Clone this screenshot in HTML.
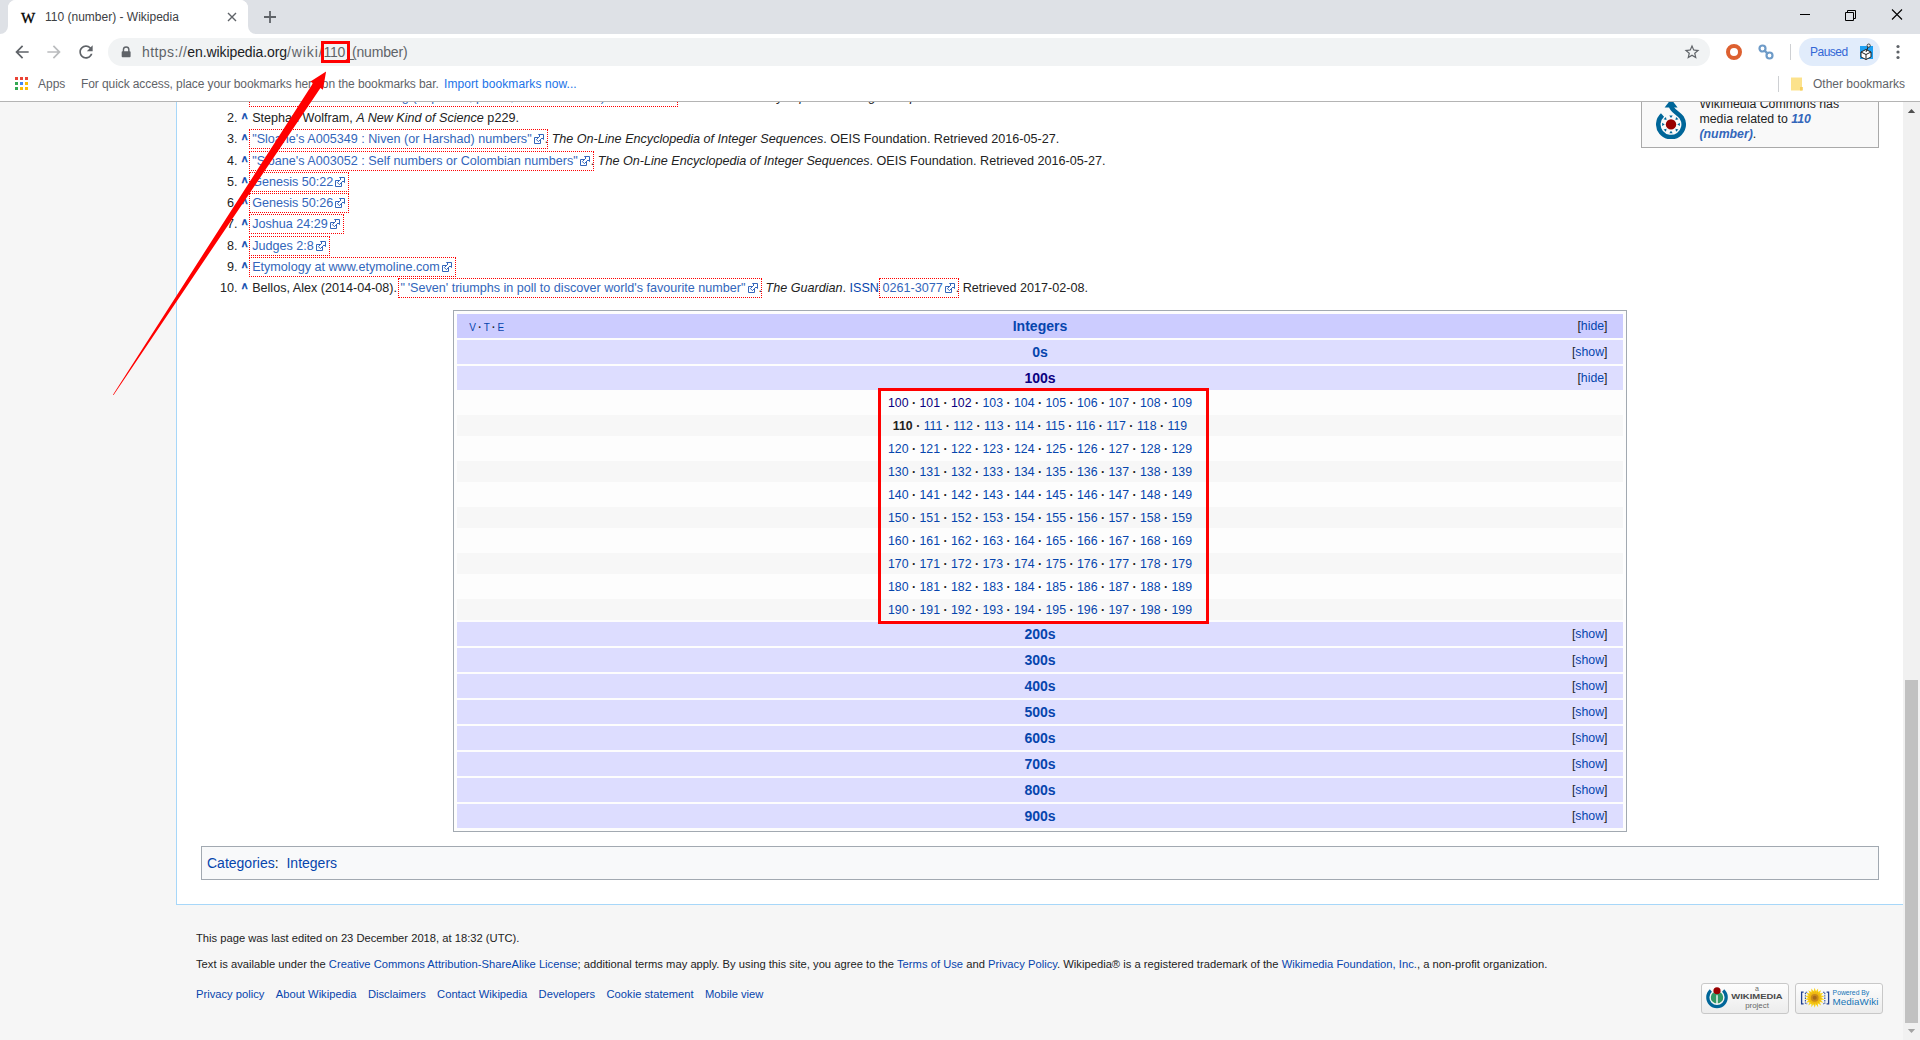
<!DOCTYPE html>
<html lang="en">
<head>
<meta charset="utf-8">
<title>110 (number) - Wikipedia</title>
<style>
html,body{margin:0;padding:0;}
body{width:1920px;height:1040px;overflow:hidden;position:relative;background:#f6f6f6;font-family:"Liberation Sans",Arial,sans-serif;color:#222;}
.abs{position:absolute;}
a{text-decoration:none;color:#0645ad;}
a.v{color:#0b0080;}
a.x{color:#3366bb;}
/* ---------- browser chrome ---------- */
#tabstrip{left:0;top:0;width:1920px;height:34px;background:#dee1e6;}
#toolbar{left:0;top:34px;width:1920px;height:67px;background:#fff;}
#chromeline{left:0;top:101px;width:1920px;height:1px;background:#b4b4b4;}
#tab{left:8px;top:0;width:240px;height:34px;background:#fff;border-radius:8px 8px 0 0;}
.ui{font-family:"Liberation Sans",Arial,sans-serif;white-space:nowrap;}
#pill{left:108px;top:38px;width:1602px;height:28px;border-radius:14px;background:#f1f3f4;}
#paused{left:1799px;top:38px;width:81px;height:28px;border-radius:14px;background:#e1ecfb;}
/* ---------- page ---------- */
#page{left:0;top:102px;width:1903px;height:938px;background:#f6f6f6;overflow:hidden;}
#content{left:176px;top:-100px;width:1727px;height:1005px;background:#fff;border:1px solid #a7d7f9;border-right:none;box-sizing:border-box;}
#sb{left:1903px;top:102px;width:17px;height:938px;background:#f1f1f1;}
#thumb{left:1905px;top:680px;width:13px;height:343px;background:#c1c1c1;}

/* references */
#refs{left:241.3px;top:0;font-size:12.6px;line-height:20.16px;white-space:nowrap;color:#222;}
#refs .r{position:absolute;left:0;height:20.16px;}
#refs .n{position:absolute;right:100%;margin-right:3.8px;top:0;}
#refs b.c{color:#0645ad;font-weight:bold;display:inline-block;width:7.36px;text-align:center;font-size:12px;line-height:10px;position:relative;top:.4px;transform:scaleX(.82);-webkit-text-stroke:.45px #0645ad;}
#refs a.x{outline:1px dotted #f00;outline-offset:2px;padding-right:13px;position:relative;}
#refs a.x svg{position:absolute;right:1px;top:2.4px;}

/* navbox */
#navbox{left:453px;top:310px;width:1174px;height:522px;box-sizing:border-box;border:1px solid #a2a9b1;background:#fdfdfd;font-size:12.32px;}
#navbox .h{position:absolute;left:3px;width:1166px;height:24px;background:#ddf;text-align:center;font-weight:bold;font-size:14.04px;line-height:24px;}
#navbox .h .t{position:absolute;right:15.5px;top:0;font-weight:normal;font-size:12.32px;color:#222;}
#navbox .l{position:absolute;left:3px;width:1166px;height:21px;text-align:center;line-height:23.4px;white-space:nowrap;word-spacing:0;}
#navbox .l.e{background:#f7f7f7;}
#navbox .l b.d{font-weight:bold;}
#vte{position:absolute;left:12.3px;top:1.6px;font-weight:normal;font-size:10px;word-spacing:-0.5px;color:#222;}

/* catlinks + footer + commons box */
#cat{left:201px;top:846px;width:1678px;height:34px;box-sizing:border-box;border:1px solid #a2a9b1;background:#f8f9fa;font-size:14px;line-height:32px;padding-left:5px;white-space:nowrap;}
.ft{font-size:11.2px;line-height:16px;white-space:nowrap;color:#222;}
#commons{left:1641px;top:60px;width:238px;height:88px;box-sizing:border-box;border:1px solid #aaa;background:#f9f9f9;font-size:12.32px;line-height:15.4px;color:#222;}
.badge{border:1px solid #c8c8c8;border-radius:3px;background:linear-gradient(#fdfdfd,#ececec);box-sizing:border-box;width:88px;height:31px;}
</style>
</head>
<body>
<!-- browser chrome -->
<div id="tabstrip" class="abs"></div>
<div id="toolbar" class="abs"></div>
<div id="tab" class="abs"></div>
<div id="pill" class="abs"></div>
<div id="paused" class="abs"></div>
<div id="chromeline" class="abs"></div>

<svg class="abs" style="left:0;top:0" width="264" height="34" viewBox="0 0 264 34"><path d="M0 34 A8 8 0 0 0 8 26 L8 8 A8 8 0 0 1 16 0 L240 0 A8 8 0 0 1 248 8 L248 26 A8 8 0 0 0 256 34 Z" fill="#fff"/></svg>
<div class="abs" id="favw" style="left:20px;top:8px;-webkit-text-stroke:.35px #000;width:16px;height:20px;font-family:'Liberation Serif',serif;font-size:15px;line-height:20px;color:#000;text-align:center;">W</div>
<div class="abs ui" id="tabtitle" style="left:45px;top:10px;font-size:12px;line-height:14px;color:#3c4043;">110 (number) - Wikipedia</div>
<svg class="abs" style="left:226px;top:11px" width="12" height="12" viewBox="0 0 12 12"><path d="M2 2 L10 10 M10 2 L2 10" stroke="#5f6368" stroke-width="1.4" fill="none"/></svg>
<svg class="abs" style="left:263px;top:10px" width="14" height="14" viewBox="0 0 14 14"><path d="M7 1 V13 M1 7 H13" stroke="#5f6368" stroke-width="1.8" fill="none"/></svg>
<!-- window controls -->
<svg class="abs" style="left:1795px;top:4px" width="120" height="22" viewBox="0 0 120 22"><path d="M5 10.5 H15" stroke="#000" stroke-width="1" fill="none"/><path d="M50.5 8.5 H58.5 V16.5 H50.5 Z M52.5 8.5 V6.5 H60.5 V14.5 H58.5" stroke="#000" stroke-width="1" fill="none"/><path d="M97 5.5 L107 15.5 M107 5.5 L97 15.5" stroke="#000" stroke-width="1.1" fill="none"/></svg>
<!-- nav buttons -->
<svg class="abs" style="left:12px;top:42px" width="20" height="20" viewBox="0 0 24 24"><path d="M20 11H7.83l5.59-5.59L12 4l-8 8 8 8 1.41-1.41L7.83 13H20v-2z" fill="#5f6368"/></svg>
<svg class="abs" style="left:44px;top:42px" width="20" height="20" viewBox="0 0 24 24"><path d="M12 4l-1.41 1.41L16.17 11H4v2h12.17l-5.58 5.59L12 20l8-8z" fill="#babcbe"/></svg>
<svg class="abs" style="left:76px;top:42px" width="20" height="20" viewBox="0 0 24 24"><path d="M17.65 6.35C16.2 4.9 14.21 4 12 4c-4.42 0-7.99 3.58-7.99 8s3.57 8 7.99 8c3.73 0 6.84-2.55 7.73-6h-2.08c-.82 2.33-3.04 4-5.65 4-3.31 0-6-2.69-6-6s2.69-6 6-6c1.66 0 3.14.69 4.22 1.78L13 11h7V4l-2.35 2.35z" fill="#5f6368"/></svg>
<!-- lock -->
<svg class="abs" style="left:121px;top:45.5px" width="10.3" height="12" viewBox="0 0 12 14"><path d="M2 6 V4.2 A4 4 0 0 1 10 4.2 V6 H10.2 A1 1 0 0 1 11.2 7 V12 A1 1 0 0 1 10.2 13 H1.8 A1 1 0 0 1 .8 12 V7 A1 1 0 0 1 1.8 6 Z M3.7 6 H8.3 V4.2 A2.3 2.3 0 0 0 3.7 4.2 Z" fill="#5f6368" fill-rule="evenodd"/></svg>
<div class="abs ui" id="url" style="left:142px;top:43px;font-size:14px;line-height:18px;color:#5f6368;"><span id="u1" style="letter-spacing:.41px">https://</span><span id="u2" style="color:#202124;letter-spacing:-.09px">en.wikipedia.org</span><span id="u3" style="display:inline-block;width:36.4px;letter-spacing:.9px">/wiki/</span><span id="u4" style="display:inline-block;width:22.7px;letter-spacing:-.2px">110</span><span id="u5" style="display:inline-block;width:5.9px;letter-spacing:-2px">_</span><span id="u6" style="letter-spacing:-.17px">(number)</span></div>
<!-- star -->
<svg class="abs" style="left:1683px;top:43px" width="18" height="18" viewBox="0 0 24 24"><path d="M22 9.24l-7.19-.62L12 2 9.19 8.63 2 9.24l5.46 4.73L5.82 21 12 17.27 18.18 21l-1.63-7.03L22 9.24zM12 15.4l-3.76 2.27 1-4.28-3.32-2.88 4.38-.38L12 6.1l1.71 4.04 4.38.38-3.32 2.88 1 4.28L12 15.4z" fill="#5f6368"/></svg>
<!-- extensions -->
<svg class="abs" style="left:1724px;top:42px" width="20" height="20" viewBox="0 0 20 20"><circle cx="10" cy="10" r="6" fill="none" stroke="#dd6030" stroke-width="4"/></svg>
<svg class="abs" style="left:1756px;top:42px" width="20" height="20" viewBox="0 0 20 20"><circle cx="6.5" cy="6.5" r="3" fill="none" stroke="#6e9bc8" stroke-width="2.2"/><circle cx="13.5" cy="13.5" r="3" fill="none" stroke="#6e9bc8" stroke-width="2.2"/><path d="M8 8 L12 12" stroke="#6e9bc8" stroke-width="2.4"/></svg>
<div class="abs" style="left:1790px;top:44px;width:1px;height:16px;background:#ced0d3;"></div>
<div class="abs ui" id="pausedt" style="letter-spacing:-.5px;left:1810px;top:45px;font-size:12px;line-height:14px;color:#3367d6;">Paused</div>
<svg class="abs" style="left:1858px;top:43px" width="17" height="18" viewBox="0 0 17 18"><rect x="2" y="3" width="13" height="13" fill="#1ea0f2"/><path d="M3 9 L8 6.5 L13 9 L13 14 L8 16.5 L3 14 Z" fill="#fff" stroke="#222" stroke-width="1"/><path d="M3 9 L8 11.5 L13 9 M8 11.5 V16.5" stroke="#222" stroke-width="1" fill="none"/><path d="M8 9 L10.5 3" stroke="#222" stroke-width="1"/><circle cx="10.7" cy="2.6" r="1.6" fill="#eee" stroke="#222" stroke-width=".8"/></svg>
<svg class="abs" style="left:1894px;top:43px" width="8" height="18" viewBox="0 0 8 18"><circle cx="4" cy="3.5" r="1.6" fill="#5f6368"/><circle cx="4" cy="9" r="1.6" fill="#5f6368"/><circle cx="4" cy="14.5" r="1.6" fill="#5f6368"/></svg>
<!-- bookmarks bar -->
<svg class="abs" style="left:15px;top:77px" width="14" height="14" viewBox="0 0 14 14"><g><rect x="0" y="0" width="3" height="3" fill="#ea4335"/><rect x="5" y="0" width="3" height="3" fill="#ea4335"/><rect x="10" y="0" width="3" height="3" fill="#ea4335"/><rect x="0" y="5" width="3" height="3" fill="#34a853"/><rect x="5" y="5" width="3" height="3" fill="#4285f4"/><rect x="10" y="5" width="3" height="3" fill="#fbbc05"/><rect x="0" y="10" width="3" height="3" fill="#34a853"/><rect x="5" y="10" width="3" height="3" fill="#fbbc05"/><rect x="10" y="10" width="3" height="3" fill="#fbbc05"/></g></svg>
<div class="abs ui" id="apps" style="left:38px;top:77px;font-size:12px;line-height:14px;color:#5f6368;">Apps</div>
<div class="abs ui" id="bmmsg" style="letter-spacing:-.09px;left:81px;top:77px;font-size:12px;line-height:14px;color:#5f6368;">For quick access, place your bookmarks here on the bookmarks bar.</div>
<div class="abs ui" id="bmimp" style="letter-spacing:.09px;left:444px;top:77px;font-size:12px;line-height:14px;color:#1a73e8;">Import bookmarks now...</div>
<div class="abs" style="left:1778px;top:76px;width:1px;height:16px;background:#ced0d3;"></div>
<svg class="abs" style="left:1790px;top:76px" width="14" height="16" viewBox="0 0 14 16"><path d="M1 1.5 H12 V14.5 H1 Z" fill="#fce28c"/><path d="M10 11 H12.8 V14.5 H10 Z" fill="#f7cf5d"/></svg>
<div class="abs ui" id="otherbm" style="left:1813px;top:77px;font-size:12px;line-height:14px;color:#5f6368;">Other bookmarks</div>
<!--CHROME-->
<!-- page -->
<div id="page" class="abs">
<div id="pg" class="abs" style="left:0;top:-102px;width:1903px;height:1040px;">
<div id="content" class="abs"></div>
<div id="refs" class="abs">
<div class="r" id="r1" style="top:87px"><span class="n">1.</span><b class="c">^</b> <a class="x">"Sloane's A002378 : Oblong (or promic, pronic, or heteromecic) numbers"<svg width="10" height="10" viewBox="0 0 10 10"><path d="M.5 3.5 H6.5 V9.5 H.5 Z" fill="#fff" stroke="#36b" stroke-width="1"/><path d="M4.5 .5 H9.5 V5.5 L8 4 L4.4 7.6 L2.4 5.6 L6 2 Z" fill="#fff" stroke="#36b" stroke-width="1" stroke-linejoin="miter"/></svg></a>. <i>The On-Line Encyclopedia of Integer Sequences</i>. OEIS Foundation. Retrieved 2016-05-27.</div>
<div class="r" id="r2" style="top:107.6px"><span class="n">2.</span><b class="c">^</b> Stephan Wolfram, <i>A New Kind of Science</i> p229.</div>
<div class="r" id="r3" style="top:129px"><span class="n">3.</span><b class="c">^</b> <a class="x">"Sloane's A005349 : Niven (or Harshad) numbers"<svg width="10" height="10" viewBox="0 0 10 10"><path d="M.5 3.5 H6.5 V9.5 H.5 Z" fill="#fff" stroke="#36b" stroke-width="1"/><path d="M4.5 .5 H9.5 V5.5 L8 4 L4.4 7.6 L2.4 5.6 L6 2 Z" fill="#fff" stroke="#36b" stroke-width="1" stroke-linejoin="miter"/></svg></a>. <i>The On-Line Encyclopedia of Integer Sequences</i>. OEIS Foundation. Retrieved 2016-05-27.</div>
<div class="r" id="r4" style="top:151px"><span class="n">4.</span><b class="c">^</b> <a class="x">"Sloane's A003052 : Self numbers or Colombian numbers"<svg width="10" height="10" viewBox="0 0 10 10"><path d="M.5 3.5 H6.5 V9.5 H.5 Z" fill="#fff" stroke="#36b" stroke-width="1"/><path d="M4.5 .5 H9.5 V5.5 L8 4 L4.4 7.6 L2.4 5.6 L6 2 Z" fill="#fff" stroke="#36b" stroke-width="1" stroke-linejoin="miter"/></svg></a>. <i>The On-Line Encyclopedia of Integer Sequences</i>. OEIS Foundation. Retrieved 2016-05-27.</div>
<div class="r" id="r5" style="top:172px"><span class="n">5.</span><b class="c">^</b> <a class="x">Genesis 50:22<svg width="10" height="10" viewBox="0 0 10 10"><path d="M.5 3.5 H6.5 V9.5 H.5 Z" fill="#fff" stroke="#36b" stroke-width="1"/><path d="M4.5 .5 H9.5 V5.5 L8 4 L4.4 7.6 L2.4 5.6 L6 2 Z" fill="#fff" stroke="#36b" stroke-width="1" stroke-linejoin="miter"/></svg></a></div>
<div class="r" id="r6" style="top:193px"><span class="n">6.</span><b class="c">^</b> <a class="x">Genesis 50:26<svg width="10" height="10" viewBox="0 0 10 10"><path d="M.5 3.5 H6.5 V9.5 H.5 Z" fill="#fff" stroke="#36b" stroke-width="1"/><path d="M4.5 .5 H9.5 V5.5 L8 4 L4.4 7.6 L2.4 5.6 L6 2 Z" fill="#fff" stroke="#36b" stroke-width="1" stroke-linejoin="miter"/></svg></a></div>
<div class="r" id="r7" style="top:214px"><span class="n">7.</span><b class="c">^</b> <a class="x">Joshua 24:29<svg width="10" height="10" viewBox="0 0 10 10"><path d="M.5 3.5 H6.5 V9.5 H.5 Z" fill="#fff" stroke="#36b" stroke-width="1"/><path d="M4.5 .5 H9.5 V5.5 L8 4 L4.4 7.6 L2.4 5.6 L6 2 Z" fill="#fff" stroke="#36b" stroke-width="1" stroke-linejoin="miter"/></svg></a></div>
<div class="r" id="r8" style="top:236px"><span class="n">8.</span><b class="c">^</b> <a class="x">Judges 2:8<svg width="10" height="10" viewBox="0 0 10 10"><path d="M.5 3.5 H6.5 V9.5 H.5 Z" fill="#fff" stroke="#36b" stroke-width="1"/><path d="M4.5 .5 H9.5 V5.5 L8 4 L4.4 7.6 L2.4 5.6 L6 2 Z" fill="#fff" stroke="#36b" stroke-width="1" stroke-linejoin="miter"/></svg></a></div>
<div class="r" id="r9" style="top:257px"><span class="n">9.</span><b class="c">^</b> <a class="x">Etymology at www.etymoline.com<svg width="10" height="10" viewBox="0 0 10 10"><path d="M.5 3.5 H6.5 V9.5 H.5 Z" fill="#fff" stroke="#36b" stroke-width="1"/><path d="M4.5 .5 H9.5 V5.5 L8 4 L4.4 7.6 L2.4 5.6 L6 2 Z" fill="#fff" stroke="#36b" stroke-width="1" stroke-linejoin="miter"/></svg></a></div>
<div class="r" id="r10" style="top:278px"><span class="n">10.</span><b class="c">^</b> Bellos, Alex (2014-04-08). <a class="x">"<span style="padding-left:2.6px">'</span>Seven' triumphs in poll to discover world's favourite number"<svg width="10" height="10" viewBox="0 0 10 10"><path d="M.5 3.5 H6.5 V9.5 H.5 Z" fill="#fff" stroke="#36b" stroke-width="1"/><path d="M4.5 .5 H9.5 V5.5 L8 4 L4.4 7.6 L2.4 5.6 L6 2 Z" fill="#fff" stroke="#36b" stroke-width="1" stroke-linejoin="miter"/></svg></a>. <i>The Guardian</i>. <a>ISSN</a>&nbsp;<a class="x">0261-3077<svg width="10" height="10" viewBox="0 0 10 10"><path d="M.5 3.5 H6.5 V9.5 H.5 Z" fill="#fff" stroke="#36b" stroke-width="1"/><path d="M4.5 .5 H9.5 V5.5 L8 4 L4.4 7.6 L2.4 5.6 L6 2 Z" fill="#fff" stroke="#36b" stroke-width="1" stroke-linejoin="miter"/></svg></a>. Retrieved 2017-02-08.</div>
</div>
<div id="navbox" class="abs">
<div class="h" style="top:3px;background:#ccf;"><span id="vte"><a>V</a> <b>·</b> <a>T</a> <b>·</b> <a>E</a></span><a class="">Integers</a><span class="t">[<a>hide</a>]</span></div>
<div class="h" style="top:29px;"><a class="">0s</a><span class="t">[<a>show</a>]</span></div>
<div class="h" style="top:55px;"><a class="v">100s</a><span class="t">[<a>hide</a>]</span></div>
<div class="l" id="l0" style="top:81px"><a class="v">100</a><b class="d"> · </b><a class="v">101</a><b class="d"> · </b><a class="v">102</a><b class="d"> · </b><a>103</a><b class="d"> · </b><a>104</a><b class="d"> · </b><a>105</a><b class="d"> · </b><a>106</a><b class="d"> · </b><a>107</a><b class="d"> · </b><a>108</a><b class="d"> · </b><a>109</a></div>
<div class="l e" id="l1" style="top:104px"><b style="color:#222">110</b><b class="d"> · </b><a>111</a><b class="d"> · </b><a>112</a><b class="d"> · </b><a>113</a><b class="d"> · </b><a>114</a><b class="d"> · </b><a>115</a><b class="d"> · </b><a>116</a><b class="d"> · </b><a>117</a><b class="d"> · </b><a>118</a><b class="d"> · </b><a>119</a></div>
<div class="l" id="l2" style="top:127px"><a>120</a><b class="d"> · </b><a>121</a><b class="d"> · </b><a>122</a><b class="d"> · </b><a>123</a><b class="d"> · </b><a>124</a><b class="d"> · </b><a>125</a><b class="d"> · </b><a>126</a><b class="d"> · </b><a>127</a><b class="d"> · </b><a>128</a><b class="d"> · </b><a>129</a></div>
<div class="l e" id="l3" style="top:150px"><a>130</a><b class="d"> · </b><a>131</a><b class="d"> · </b><a>132</a><b class="d"> · </b><a>133</a><b class="d"> · </b><a>134</a><b class="d"> · </b><a>135</a><b class="d"> · </b><a>136</a><b class="d"> · </b><a>137</a><b class="d"> · </b><a>138</a><b class="d"> · </b><a>139</a></div>
<div class="l" id="l4" style="top:173px"><a>140</a><b class="d"> · </b><a>141</a><b class="d"> · </b><a>142</a><b class="d"> · </b><a>143</a><b class="d"> · </b><a>144</a><b class="d"> · </b><a>145</a><b class="d"> · </b><a>146</a><b class="d"> · </b><a>147</a><b class="d"> · </b><a>148</a><b class="d"> · </b><a>149</a></div>
<div class="l e" id="l5" style="top:196px"><a>150</a><b class="d"> · </b><a>151</a><b class="d"> · </b><a>152</a><b class="d"> · </b><a>153</a><b class="d"> · </b><a>154</a><b class="d"> · </b><a>155</a><b class="d"> · </b><a>156</a><b class="d"> · </b><a>157</a><b class="d"> · </b><a>158</a><b class="d"> · </b><a>159</a></div>
<div class="l" id="l6" style="top:219px"><a>160</a><b class="d"> · </b><a>161</a><b class="d"> · </b><a>162</a><b class="d"> · </b><a>163</a><b class="d"> · </b><a>164</a><b class="d"> · </b><a>165</a><b class="d"> · </b><a>166</a><b class="d"> · </b><a>167</a><b class="d"> · </b><a>168</a><b class="d"> · </b><a>169</a></div>
<div class="l e" id="l7" style="top:242px"><a>170</a><b class="d"> · </b><a>171</a><b class="d"> · </b><a>172</a><b class="d"> · </b><a>173</a><b class="d"> · </b><a>174</a><b class="d"> · </b><a>175</a><b class="d"> · </b><a>176</a><b class="d"> · </b><a>177</a><b class="d"> · </b><a>178</a><b class="d"> · </b><a>179</a></div>
<div class="l" id="l8" style="top:265px"><a>180</a><b class="d"> · </b><a>181</a><b class="d"> · </b><a>182</a><b class="d"> · </b><a>183</a><b class="d"> · </b><a>184</a><b class="d"> · </b><a>185</a><b class="d"> · </b><a>186</a><b class="d"> · </b><a>187</a><b class="d"> · </b><a>188</a><b class="d"> · </b><a>189</a></div>
<div class="l e" id="l9" style="top:288px"><a>190</a><b class="d"> · </b><a>191</a><b class="d"> · </b><a>192</a><b class="d"> · </b><a>193</a><b class="d"> · </b><a>194</a><b class="d"> · </b><a>195</a><b class="d"> · </b><a>196</a><b class="d"> · </b><a>197</a><b class="d"> · </b><a>198</a><b class="d"> · </b><a>199</a></div>
<div class="h" style="top:311px;"><a class="">200s</a><span class="t">[<a>show</a>]</span></div>
<div class="h" style="top:337px;"><a class="">300s</a><span class="t">[<a>show</a>]</span></div>
<div class="h" style="top:363px;"><a class="">400s</a><span class="t">[<a>show</a>]</span></div>
<div class="h" style="top:389px;"><a class="">500s</a><span class="t">[<a>show</a>]</span></div>
<div class="h" style="top:415px;"><a class="">600s</a><span class="t">[<a>show</a>]</span></div>
<div class="h" style="top:441px;"><a class="">700s</a><span class="t">[<a>show</a>]</span></div>
<div class="h" style="top:467px;"><a class="">800s</a><span class="t">[<a>show</a>]</span></div>
<div class="h" style="top:493px;"><a class="">900s</a><span class="t">[<a>show</a>]</span></div>
</div>
<div id="cat" class="abs"><a>Categories</a>: <span style="padding-left:4px"></span><a>Integers</a></div>
<div id="f1" class="abs ft" style="left:196px;top:930px;">This page was last edited on 23 December 2018, at 18:32<span class="nop"> (UTC)</span>.</div>
<div id="f2" class="abs ft" style="left:196px;top:956px;letter-spacing:.013px;">Text is available under the <a>Creative Commons Attribution-ShareAlike License</a>; additional terms may apply. By using this site, you agree to the <a>Terms of Use</a> and <a>Privacy Policy</a>. Wikipedia® is a registered trademark of the <a>Wikimedia Foundation, Inc.</a>, a non-profit organization.</div>
<div id="f3" class="abs ft" style="left:196px;top:986px;"><a id="fa1">Privacy policy</a><a id="fa2" style="margin-left:11.35px">About Wikipedia</a><a id="fa3" style="margin-left:11.35px">Disclaimers</a><a id="fa4" style="margin-left:11.35px">Contact Wikipedia</a><a id="fa5" style="margin-left:11.35px">Developers</a><a id="fa6" style="margin-left:11.35px">Cookie statement</a><a id="fa7" style="margin-left:11.35px">Mobile view</a></div>
<div id="commons" class="abs">
<svg class="abs" style="left:14px;top:37.7px" width="30" height="40" viewBox="0 0 30 40"><path d="M6.50 15.96 A12.70 12.70 0 1 0 25.77 18.67 C21.50 13.20 15.20 11.50 15.10 6.50" fill="none" stroke="#069" stroke-width="4.6"/><path d="M15.1 0 L21.6 8.6 H8.6 Z" fill="#069"/><circle cx="15.0" cy="25.4" r="5.2" fill="#900"/><path d="M19.45 20.95 L20.03 17.94 L22.46 20.37 Z M21.30 25.40 L23.83 23.68 L23.83 27.12 Z M19.45 29.85 L22.46 30.43 L20.03 32.86 Z M15.00 31.70 L16.72 34.23 L13.28 34.23 Z M10.55 29.85 L9.97 32.86 L7.54 30.43 Z M8.70 25.40 L6.17 27.12 L6.17 23.68 Z M10.55 20.95 L7.54 20.37 L9.97 17.94 Z M15.00 19.10 L13.28 16.57 L16.72 16.57 Z" fill="#069"/></svg>
<div class="abs" id="cmt" style="left:57.5px;top:35.6px;white-space:nowrap;">Wikimedia Commons has<br>media related to <a class="x" style="font-weight:bold;font-style:italic">110</a><br><a class="x" style="font-weight:bold;font-style:italic">(number)</a>.</div>
</div>
<div id="wmbadge" class="abs badge" style="left:1701px;top:983px;"><svg class="abs" style="left:0;top:0" width="86" height="29" viewBox="0 0 86 29"><path d="M8.84 6.56 A9.20 9.20 0 1 0 21.16 6.56" fill="none" stroke="#069" stroke-width="3.2"/><circle cx="15.00" cy="6.90" r="3.6" fill="#900"/><path d="M11.18 8.51 A6.20 6.20 0 1 0 18.82 8.51 A5 5 0 0 1 11.18 8.51 Z" fill="#396"/><rect x="14.25" y="11.20" width="1.5" height="9" fill="#f4f4f4"/></svg><div class="abs" style="left:25px;top:0.5px;width:60px;text-align:center;font-size:7px;line-height:8px;color:#666;">a</div><div class="abs" style="left:25px;top:9.2px;width:60px;text-align:center;font-size:7.1px;line-height:9px;font-weight:bold;color:#4a4a4a;transform:scaleX(1.33);white-space:nowrap;">WIKIMEDIA</div><div class="abs" style="left:25px;top:16.6px;width:60px;text-align:center;font-size:7.9px;line-height:10px;color:#666;">project</div></div>
<div id="mwbadge" class="abs badge" style="left:1795px;top:983px;"><svg class="abs" style="left:0;top:0" width="86" height="29" viewBox="0 0 86 29"><path d="M7.6 8.2 H5.6 V19.8 H7.6 M30.6 8.2 H32.6 V19.8 H30.6" fill="none" stroke="#1e3f8f" stroke-width="1.3"/><path d="M11.2 8.2 H9.4 V19.8 H11.2 M27.0 8.2 H28.8 V19.8 H27.0" fill="none" stroke="#2a4fa0" stroke-width="1.1" stroke-dasharray="1.4 1"/><polygon points="18.70,3.80 19.85,7.30 22.12,4.40 22.00,8.08 25.13,6.14 23.76,9.56 27.36,8.80 24.90,11.54 28.55,12.06 25.30,13.80 28.55,15.54 24.90,16.06 27.36,18.80 23.76,18.04 25.13,21.46 22.00,19.52 22.12,23.20 19.85,20.30 18.70,23.80 17.55,20.30 15.28,23.20 15.40,19.52 12.27,21.46 13.64,18.04 10.04,18.80 12.50,16.06 8.85,15.54 12.10,13.80 8.85,12.06 12.50,11.54 10.04,8.80 13.64,9.56 12.27,6.14 15.40,8.08 15.28,4.40 17.55,7.30" fill="#f8d21c"/><polygon points="19.44,6.44 20.22,8.83 22.20,7.28 22.01,9.79 24.43,9.12 23.29,11.36 25.79,11.66 23.88,13.30 26.06,14.54 23.67,15.32 25.22,17.30 22.71,17.11 23.38,19.53 21.14,18.39 20.84,20.89 19.20,18.98 17.96,21.16 17.18,18.77 15.20,20.32 15.39,17.81 12.97,18.48 14.11,16.24 11.61,15.94 13.52,14.30 11.34,13.06 13.73,12.28 12.18,10.30 14.69,10.49 14.02,8.07 16.26,9.21 16.56,6.71 18.20,8.62" fill="#efb810"/><circle cx="18.70" cy="13.80" r="3.9" fill="#c98a1a"/><circle cx="18.70" cy="13.80" r="2" fill="#a5691a"/></svg><div class="abs" style="left:36.6px;top:5.4px;font-size:6.8px;line-height:8px;color:#1575b6;white-space:nowrap;">Powered By</div><div class="abs" style="left:36.4px;top:11.9px;font-size:9.8px;line-height:12px;color:#1575b6;white-space:nowrap;letter-spacing:.1px;">MediaWiki</div></div>
<!--PAGE-->
</div>
</div>
<div id="sb" class="abs"></div>
<div id="thumb" class="abs"></div>
<svg class="abs" style="left:0;top:0;pointer-events:none" width="1920" height="1040" viewBox="0 0 1920 1040">
<polygon points="112.99,394.69 113.61,395.11 320.42,88.05 322.9,89.7 326.1,71.4 310.5,81.5 312.98,83.15" fill="#ff0000"/>
<rect x="322.5" y="42.5" width="26" height="19" fill="none" stroke="#ff0000" stroke-width="3"/>
<rect x="879.5" y="389.5" width="328" height="233" fill="none" stroke="#ff0000" stroke-width="3"/>
</svg>
<svg class="abs" style="left:1903px;top:102px" width="17" height="938" viewBox="0 0 17 938"><path d="M4.8 11 L8.5 7 L12.2 11 Z" fill="#505050"/><path d="M4.8 927 L8.5 931 L12.2 927 Z" fill="#a3a3a3"/></svg>
<!--OVERLAY-->
</body>
</html>
